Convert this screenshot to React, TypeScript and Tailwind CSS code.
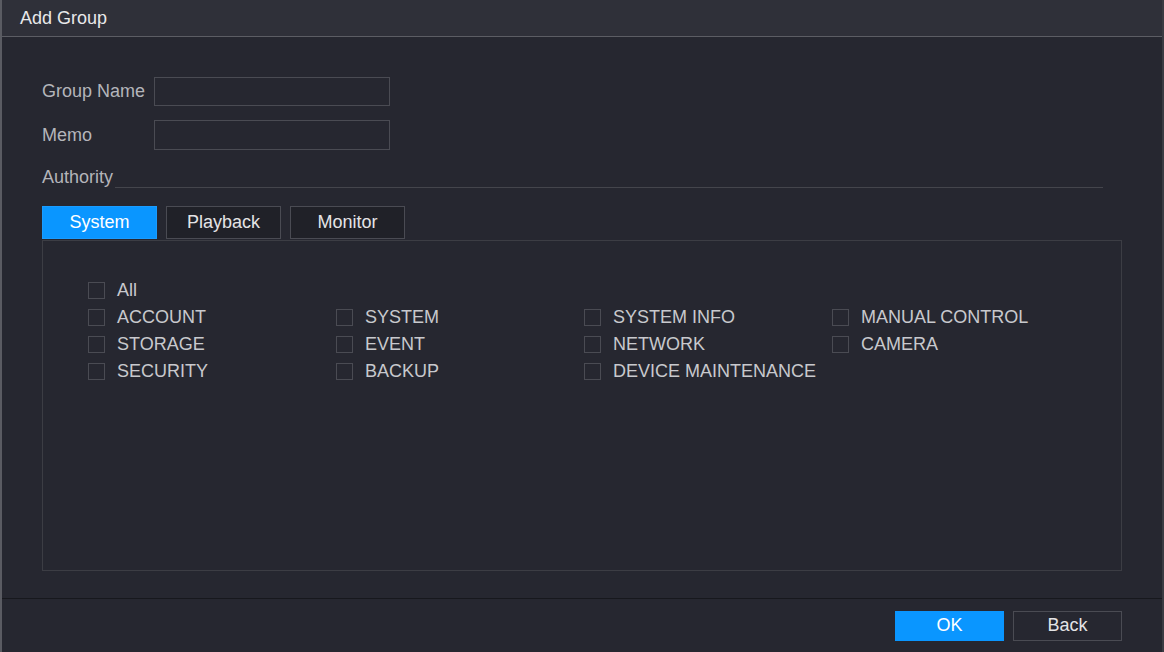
const cols = [
  ["ACCOUNT", "STORAGE", "SECURITY"],
  ["SYSTEM", "EVENT", "BACKUP"],
  ["SYSTEM INFO", "NETWORK", "DEVICE MAINTENANCE"],
  ["MANUAL CONTROL", "CAMERA"],
]

function Check({ label }: { label: string }) {
  return (
    <div className="flex h-[27px] items-center gap-[12px]">
      <div className="h-[17px] w-[17px] border border-[#4a4b53]" />
      <span className="text-[18px] text-[#c8c9cd]">{label}</span>
    </div>
  )
}

function Tab({ label, active }: { label: string; active?: boolean }) {
  return (
    <div
      className={`flex h-[33px] w-[115px] items-center justify-center border text-[18px] ${
        active ? "border-[#1a9cff] bg-[#0a96ff] text-white" : "border-[#4a4b53] bg-[#202128] text-[#e4e4e6]"
      }`}
    >
      {label}
    </div>
  )
}

export default function App() {
  return (
    <div
      className="flex h-[652px] w-[1164px] flex-col border-x-2 border-l-[#5a5b62] border-r-[#3a3b42] bg-[#262730]"
      style={{ fontFamily: '"Liberation Sans", Arial, sans-serif' }}
    >
      <div className="flex h-[37px] items-center border-b border-[#5c5d64] bg-[#2f3039] pl-[18px] text-[18px] text-[#e8e8ea]">
        Add Group
      </div>
      <div className="flex flex-1 flex-col px-[40px] pt-[40px] text-[18px] text-[#b4b5ba]">
        <div className="flex h-[29px] items-center">
          <span className="w-[112px]">Group Name</span>
          <div className="h-[29px] w-[236px] border border-[#4a4b53]" />
        </div>
        <div className="mt-[14px] flex h-[30px] items-center">
          <span className="w-[112px]">Memo</span>
          <div className="h-[30px] w-[236px] border border-[#4a4b53]" />
        </div>
        <div className="mt-[14px] flex items-end">
          <span>Authority</span>
          <div className="mb-[3px] ml-[2px] h-px w-[988px] bg-[#44454c]" />
        </div>
        <div className="mt-[15px] flex gap-[9px]">
          <Tab label="System" active />
          <Tab label="Playback" />
          <Tab label="Monitor" />
        </div>
        <div className="mt-[1px] h-[331px] w-[1080px] border border-[#3c3d44] pl-[45px] pt-[36px]">
          <Check label="All" />
          <div className="flex">
            {cols.map((c, i) => (
              <div key={i} className="w-[248px]">
                {c.map((l) => (
                  <Check key={l} label={l} />
                ))}
              </div>
            ))}
          </div>
        </div>
      </div>
      <div className="flex h-[54px] items-center justify-end gap-[9px] border-t border-[#17181d] pr-[40px]">
        <div className="flex h-[30px] w-[109px] items-center justify-center bg-[#0a96ff] text-[18px] text-white">OK</div>
        <div className="flex h-[30px] w-[109px] items-center justify-center border border-[#4a4b53] text-[18px] text-[#e4e4e6]">Back</div>
      </div>
    </div>
  )
}
